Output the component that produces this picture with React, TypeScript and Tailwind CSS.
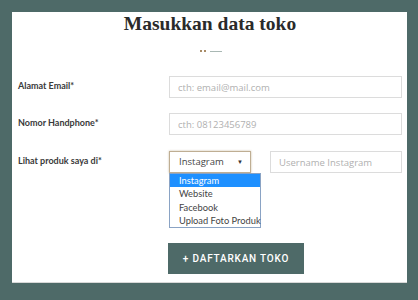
import React from "react";

const labelCls =
  "w-[151px] shrink-0 pt-[4px] text-[9px] leading-[12px] font-bold text-[#3a3a3a] [font-family:Lato,'Noto_Sans',sans-serif]";
const inputCls =
  "h-[22px] border border-[#dcdcdc] bg-white px-[8px] text-[9.5px] text-[#444] placeholder:text-[#b0b0b0] outline-none [font-family:'Open_Sans','Noto_Sans',sans-serif]";

export default function App() {
  const options = ["Instagram", "Website", "Facebook", "Upload Foto Produk"];

  return (
    <div className="h-[300px] w-[418px] bg-[#4e6a68] pl-[12px] pt-[12px]">
      <div className="h-[271px] w-[395px] border-b border-[#d8d8d8] bg-white pl-[6px] pr-[5px]">
        <h1 className="pt-[1px] text-center text-[19.5px] leading-[22px] font-bold text-[#2a2a2a] [font-family:'Liberation_Serif',serif]">
          Masukkan data toko
        </h1>

        {/* ornament */}
        <div className="mt-[15px] flex items-center justify-center gap-[2px] pl-[2px]">
          <span className="h-[2px] w-[2px] bg-[#a88b66]" />
          <span className="h-[2px] w-[2px] bg-[#a88b66]" />
          <span className="ml-[2px] h-px w-[12px] bg-[#a9b8b4]" />
        </div>

        <div className="mt-[24px] flex items-start">
          <label className={labelCls}>Alamat Email*</label>
          <input className={inputCls + " w-[233px]"} placeholder="cth: email@mail.com" />
        </div>

        <div className="mt-[15px] flex items-start">
          <label className={labelCls}>Nomor Handphone*</label>
          <input className={inputCls + " w-[233px]"} placeholder="cth: 08123456789" />
        </div>

        <div className="mt-[16px] flex items-start">
          <label className={labelCls}>Lihat produk saya di*</label>
          <div className="relative w-[82px] shrink-0">
            <div className="flex h-[22px] items-center justify-between border border-[#bfae93] bg-white pl-[9px] pr-[7px] shadow-[0_0_2px_rgba(140,110,60,0.45)]">
              <span className="text-[9.5px] text-[#444] [font-family:'Open_Sans','Noto_Sans',sans-serif]">
                Instagram
              </span>
              <span className="text-[6px] text-[#333]">▼</span>
            </div>
            <ul className="absolute left-0 top-[22px] z-10 w-[92px] border border-[#8aa3c4] bg-white [font-family:Lato,sans-serif] text-[9.3px] leading-[13.3px] text-[#444]">
              {options.map((o, i) => (
                <li
                  key={o}
                  className={
                    "whitespace-nowrap pl-[9px] " +
                    (i === 0 ? "bg-[#1e90ff] text-white" : "")
                  }
                >
                  {o}
                </li>
              ))}
            </ul>
          </div>
          <input className={inputCls + " ml-[19px] w-[132px]"} placeholder="Username Instagram" />
        </div>

        <div className="mt-[70px] flex pl-[150px]">
          <button className="h-[31px] w-[136px] bg-[#4e6a68] text-[10px] font-medium tracking-[0.8px] text-white [font-family:Roboto,'Noto_Sans',sans-serif]">
            + DAFTARKAN TOKO
          </button>
        </div>
      </div>
    </div>
  );
}
